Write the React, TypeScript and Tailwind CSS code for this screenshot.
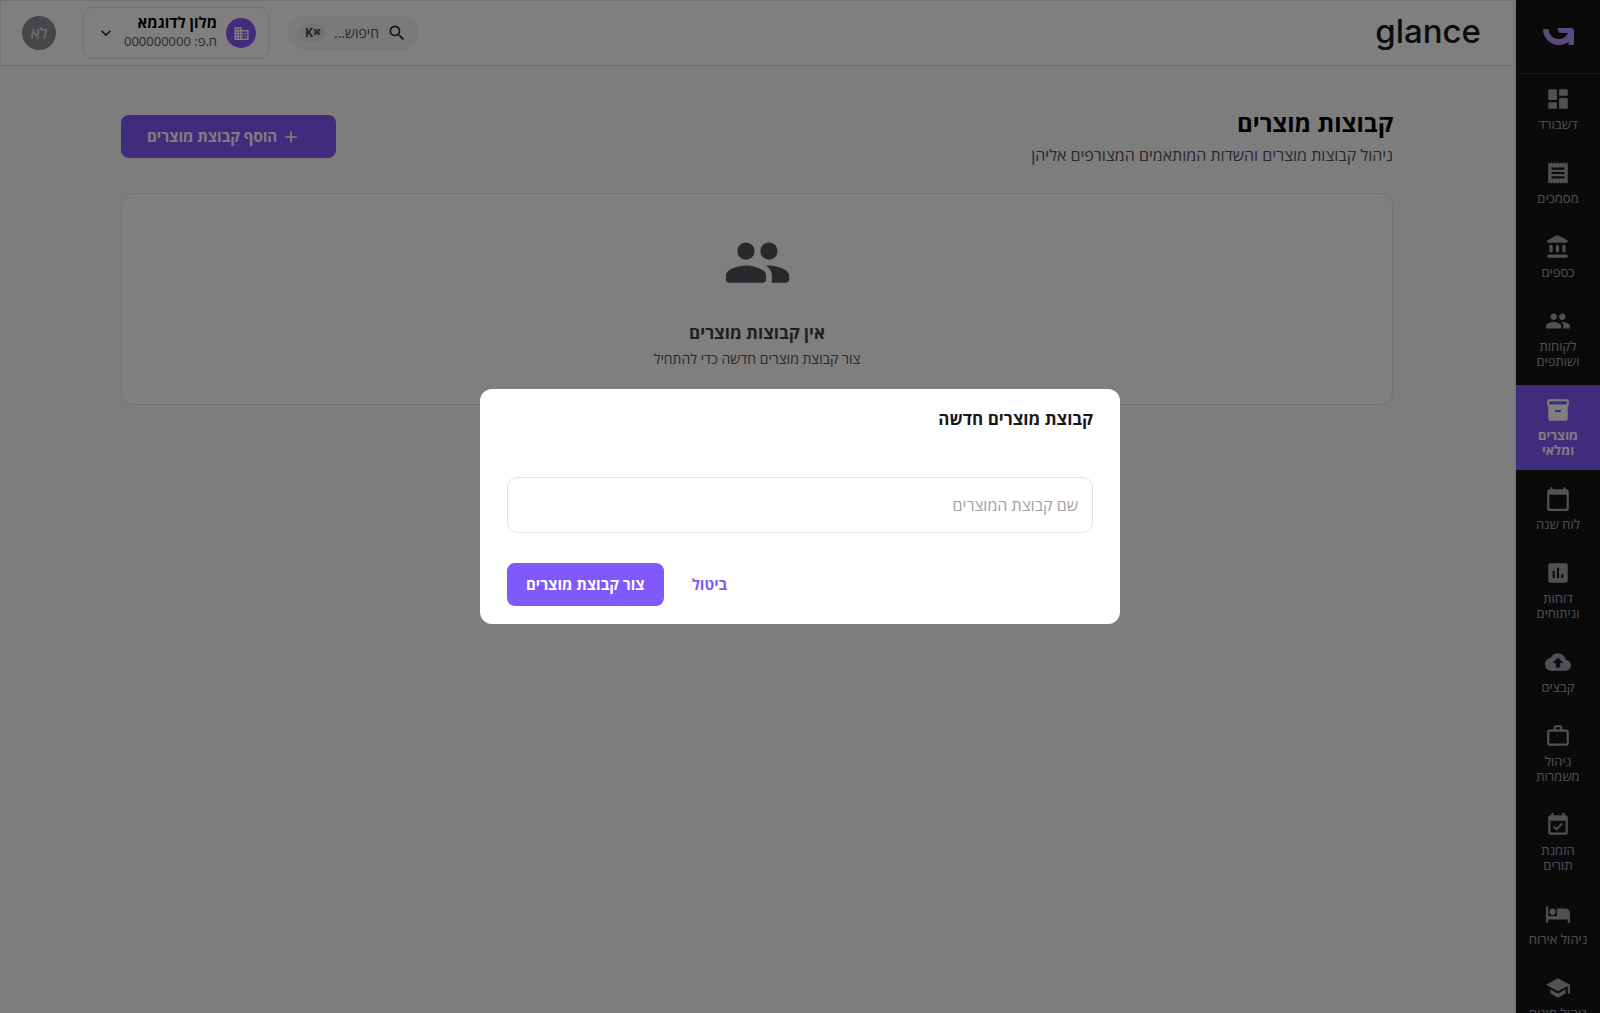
import type { ReactNode } from 'react'
import {
  MdAdd,
  MdBackup,
  MdBusiness,
  MdEventAvailable,
  MdExpandMore,
  MdHotel,
  MdReceipt,
  MdSchool,
  MdSearch,
  MdWorkOutline,
} from 'react-icons/md'

type IconProps = { className?: string }

const RoundedIcon = ({ d, className }: IconProps & { d: string }) => (
  <svg aria-hidden viewBox="0 0 24 24" fill="currentColor" className={className}>
    <path d={d} />
  </svg>
)

const DASHBOARD =
  'M4 13h6c.55 0 1-.45 1-1V4c0-.55-.45-1-1-1H4c-.55 0-1 .45-1 1v8c0 .55.45 1 1 1zm0 8h6c.55 0 1-.45 1-1v-4c0-.55-.45-1-1-1H4c-.55 0-1 .45-1 1v4c0 .55.45 1 1 1zm10 0h6c.55 0 1-.45 1-1v-8c0-.55-.45-1-1-1h-6c-.55 0-1 .45-1 1v8c0 .55.45 1 1 1zM13 4v4c0 .55.45 1 1 1h6c.55 0 1-.45 1-1V4c0-.55-.45-1-1-1h-6c-.55 0-1 .45-1 1z'
const BANK =
  'M4 11.5v4c0 .83.67 1.5 1.5 1.5S7 16.33 7 15.5v-4c0-.83-.67-1.5-1.5-1.5S4 10.67 4 11.5zm6 0v4c0 .83.67 1.5 1.5 1.5s1.5-.67 1.5-1.5v-4c0-.83-.67-1.5-1.5-1.5s-1.5.67-1.5 1.5zM3.5 22h16c.83 0 1.5-.67 1.5-1.5s-.67-1.5-1.5-1.5h-16c-.83 0-1.5.67-1.5 1.5S2.67 22 3.5 22zM16 11.5v4c0 .83.67 1.5 1.5 1.5s1.5-.67 1.5-1.5v-4c0-.83-.67-1.5-1.5-1.5s-1.5.67-1.5 1.5zM10.57 1.49l-7.9 4.16c-.41.21-.67.64-.67 1.1C2 7.44 2.56 8 3.25 8h16.51C20.44 8 21 7.44 21 6.75c0-.46-.26-.89-.67-1.1l-7.9-4.16c-.58-.31-1.28-.31-1.86 0z'
const PEOPLE =
  'M16 11c1.66 0 2.99-1.34 2.99-3S17.66 5 16 5s-3 1.34-3 3 1.34 3 3 3zm-8 0c1.66 0 2.99-1.34 2.99-3S9.66 5 8 5 5 6.34 5 8s1.34 3 3 3zm0 2c-2.33 0-7 1.17-7 3.5V18c0 .55.45 1 1 1h12c.55 0 1-.45 1-1v-1.5c0-2.33-4.67-3.5-7-3.5zm8 0c-.29 0-.62.02-.97.05.02.01.03.03.04.04 1.14.83 1.93 1.94 1.93 3.41V18c0 .35-.07.69-.18 1H22c.55 0 1-.45 1-1v-1.5c0-2.33-4.67-3.5-7-3.5z'
const INVENTORY =
  'M20 2H4c-1 0-2 .9-2 2v3.01c0 .72.43 1.34 1 1.69V20c0 1.1 1.1 2 2 2h14c.9 0 2-.9 2-2V8.7c.57-.35 1-.97 1-1.69V4c0-1.1-1-2-2-2zm-6 12h-4c-.55 0-1-.45-1-1s.45-1 1-1h4c.55 0 1 .45 1 1s-.45 1-1 1zm6-7H4V4h16v3z'
const CALENDAR =
  'M20 3h-1V2c0-.55-.45-1-1-1s-1 .45-1 1v1H7V2c0-.55-.45-1-1-1s-1 .45-1 1v1H4c-1.1 0-2 .9-2 2v16c0 1.1.9 2 2 2h16c1.1 0 2-.9 2-2V5c0-1.1-.9-2-2-2zm-1 18H5c-.55 0-1-.45-1-1V8h16v12c0 .55-.45 1-1 1z'
const REPORTS =
  'M19 3H5c-1.1 0-2 .9-2 2v14c0 1.1.9 2 2 2h14c1.1 0 2-.9 2-2V5c0-1.1-.9-2-2-2zM8 17c-.55 0-1-.45-1-1v-5c0-.55.45-1 1-1s1 .45 1 1v5c0 .55-.45 1-1 1zm4 0c-.55 0-1-.45-1-1V8c0-.55.45-1 1-1s1 .45 1 1v8c0 .55-.45 1-1 1zm4 0c-.55 0-1-.45-1-1v-2c0-.55.45-1 1-1s1 .45 1 1v2c0 .55-.45 1-1 1z'

type NavItem = { lines: string[]; icon: ReactNode; active?: boolean }

const navItems: NavItem[] = [
  { lines: ['דשבורד'], icon: <RoundedIcon d={DASHBOARD} className="size-[26px]" /> },
  { lines: ['מסמכים'], icon: <MdReceipt className="size-[26px]" /> },
  { lines: ['כספים'], icon: <RoundedIcon d={BANK} className="size-[26px]" /> },
  { lines: ['לקוחות', 'ושותפים'], icon: <RoundedIcon d={PEOPLE} className="size-[26px]" /> },
  {
    lines: ['מוצרים', 'ומלאי'],
    icon: <RoundedIcon d={INVENTORY} className="size-[26px]" />,
    active: true,
  },
  { lines: ['לוח שנה'], icon: <RoundedIcon d={CALENDAR} className="size-[26px]" /> },
  { lines: ['דוחות', 'וניתוחים'], icon: <RoundedIcon d={REPORTS} className="size-[26px]" /> },
  { lines: ['קבצים'], icon: <MdBackup className="size-[26px]" /> },
  { lines: ['ניהול', 'משמרות'], icon: <MdWorkOutline className="size-[26px]" /> },
  { lines: ['הזמנת', 'תורים'], icon: <MdEventAvailable className="size-[26px]" /> },
  { lines: ['ניהול אירוח'], icon: <MdHotel className="size-[26px]" /> },
  { lines: ['ניהול חוגים'], icon: <MdSchool className="size-[26px]" /> },
]

const Sidebar = () => (
  <aside className="flex h-full w-[86px] shrink-0 flex-col overflow-hidden border-e-2 border-[#f0f0f2] bg-[#151515]">
    <div className="flex h-[74px] shrink-0 items-center justify-center border-b border-[#2a2a2a]">
      <svg aria-label="Glance" role="img" viewBox="0 0 31 17" className="h-[17px] w-[31px]">
        <path
          fill="#b094f5"
          d="M14.500 0H28q3 0 3 3v14h-5.500v-3C23 16 19.500 17 16 17 7 17 0 10 0 1h5.500c.5 6 4.500 10 10 10 4.500 0 8-2.300 9.500-6H18.500q-4 0-4-5z"
        />
      </svg>
    </div>
    <nav className="flex flex-col gap-1">
      {navItems.map((item) => (
        <a
          key={item.lines.join(' ')}
          href="#"
          aria-current={item.active ? 'page' : undefined}
          className={
            item.active
              ? 'flex shrink-0 flex-col items-center gap-[5px] bg-[#8058fb] py-3 font-bold text-white'
              : 'flex shrink-0 flex-col items-center gap-[5px] py-3 text-[#a1a1aa]'
          }
        >
          {item.icon}
          <span className="text-center text-[13px] leading-[15px]">
            {item.lines.map((line) => (
              <span key={line} className="block">
                {line}
              </span>
            ))}
          </span>
        </a>
      ))}
    </nav>
  </aside>
)

const Header = () => (
  <header className="flex h-[66px] shrink-0 items-center border border-[#e4e4e7] bg-white pr-8 pl-[21px]">
    <span
      dir="ltr"
      className="pb-1 font-['Inter'] text-[33px] leading-10 font-medium text-[#18181b]"
    >
      glance
    </span>
    <button
      type="button"
      className="ms-auto flex h-[34px] items-center rounded-full bg-[#f4f4f5] px-3 text-[#52525b]"
    >
      <MdSearch className="size-5 text-[#27272a]" />
      <span className="ms-2 text-sm">חיפוש...</span>
      <kbd className="ms-2 flex h-5 w-[26px] items-center justify-center rounded-full bg-[#e8e8ea] font-['Roboto'] text-xs font-bold text-[#3f3f46]">
        <span className="text-[8px]">⌘</span>K
      </kbd>
    </button>
    <button
      type="button"
      className="ms-[18px] flex h-[52px] items-center rounded-xl border border-[#e4e4e7] px-[13px]"
    >
      <span className="flex size-[30px] items-center justify-center rounded-full bg-[#8058fb] text-white">
        <MdBusiness className="size-[17px]" />
      </span>
      <span className="ms-[9px] pb-1 text-right">
        <span className="block text-[15px] leading-5 font-bold text-black">מלון לדוגמא</span>
        <span className="block text-[13px] leading-[18px] text-[#52525b]">ח.פ: 000000000</span>
      </span>
      <MdExpandMore className="ms-2 size-5 text-[#27272a]" />
    </button>
    <span className="ms-[26px] flex size-[34px] items-center justify-center rounded-full bg-[#8e8e96] text-base text-[#e4e4e7]">
      לא
    </span>
  </header>
)

const EmptyState = () => (
  <section className="mt-[26px] flex h-[212px] flex-col items-center rounded-xl border border-[#e4e4e7] bg-white pt-[34px] text-center">
    <RoundedIcon d={PEOPLE} className="size-[69px] text-[#52525b]" />
    <h2 className="mt-6 text-[17px] leading-6 font-bold text-[#3f3f46]">אין קבוצות מוצרים</h2>
    <p className="mt-1 text-sm leading-5 text-[#52525b]">צור קבוצת מוצרים חדשה כדי להתחיל</p>
  </section>
)

const NewGroupDialog = () => (
  <div className="fixed inset-0 flex items-center justify-center bg-black/50">
    <form
      role="dialog"
      aria-modal="true"
      aria-labelledby="dialog-title"
      className="w-[640px] rounded-xl bg-white px-[27px] pt-[18px] pb-[18px]"
    >
      <h2 id="dialog-title" className="text-[17px] leading-6 font-bold text-[#18181b]">
        קבוצת מוצרים חדשה
      </h2>
      <input
        type="text"
        aria-label="שם קבוצת המוצרים"
        placeholder="שם קבוצת המוצרים"
        className="mt-[46px] block h-14 w-full rounded-[10px] border border-[#e4e4e7] px-3.5 text-base outline-none placeholder:text-[#a1a1aa]"
      />
      <div className="mt-[30px] flex justify-end gap-2">
        <button type="button" className="h-[43px] px-5 text-[15px] font-bold text-[#8058fb]">
          ביטול
        </button>
        <button
          type="submit"
          className="h-[43px] rounded-lg bg-[#8058fb] px-[19px] text-[15px] font-bold text-white"
        >
          צור קבוצת מוצרים
        </button>
      </div>
    </form>
  </div>
)

export default function App() {
  return (
    <div
      dir="rtl"
      className="flex h-screen overflow-hidden bg-[#fafafa] font-['Open_Sans','Liberation_Sans',sans-serif]"
    >
      <Sidebar />
      <div className="flex min-w-0 flex-1 flex-col">
        <Header />
        <main className="px-[121px] pt-[41px]">
          <div className="flex items-start justify-between">
            <div>
              <h1 className="text-2xl leading-8 font-bold text-black">קבוצות מוצרים</h1>
              <p className="mt-1 text-base leading-6 text-[#52525b]">
                ניהול קבוצות מוצרים והשדות המותאמים המצורפים אליהן
              </p>
            </div>
            <button
              type="button"
              className="mt-2 flex h-[43px] items-center gap-1 rounded-lg bg-[#8058fb] ps-[35px] pe-[26px] text-[15px] font-bold text-white"
            >
              <MdAdd className="size-5" />
              הוסף קבוצת מוצרים
            </button>
          </div>
          <EmptyState />
        </main>
      </div>
      <NewGroupDialog />
    </div>
  )
}
